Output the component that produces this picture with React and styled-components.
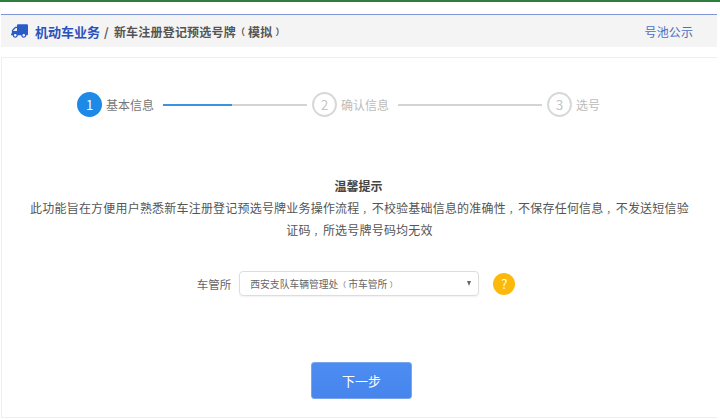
import React from 'react';
import styled, { createGlobalStyle } from 'styled-components';
import { FaTruck } from 'react-icons/fa';

const GlobalStyle = createGlobalStyle`
  html, body {
    margin: 0;
    padding: 0;
    background: #fff;
    overflow: hidden;
  }
  body {
    font-family: "Noto Sans CJK SC", "Liberation Sans", sans-serif;
  }
`;

const Page = styled.div`
  width: 720px;
  height: 419px;
  box-sizing: border-box;
  border-top: 2px solid #2e7d3c;
  padding: 12px 3px 0 1px;
  overflow: hidden;
`;

const Header = styled.header`
  height: 32px;
  border-top: 1px solid #7f94d4;
  background: #f4f4f4;
  display: flex;
  align-items: center;
  padding: 0 24px 0 10px;
`;

const Crumbs = styled.div`
  display: flex;
  align-items: center;
  font-size: 12px;
  letter-spacing: 0.2px;
  font-weight: 700;
  color: #555;
`;

const Truck = styled(FaTruck)`
  width: 17px;
  height: 14px;
  margin-right: 7px;
  color: #2a5cc8;
  transform: scaleX(-1);
`;

const Strong = styled.span`
  color: #2b51bd;
  font-size: 13px;
  letter-spacing: 0;
`;

const Slash = styled.span`
  margin: 0 5px 0 4px;
`;

/* 全角括号在字框内居中 */
const Paren = styled.span`
  font-size: ${p => p.$size}px;
  line-height: 1;
  padding: ${p => (p.$open ? `0 ${p.$pad}px 0 0` : `0 0 0 ${p.$pad}px`)};
`;

/* 逗号偏到字框中间 */
const Comma = styled.span`
  font-size: 9px;
  line-height: 1;
  padding-left: 3px;
`;

const PoolLink = styled.a`
  margin-left: auto;
  font-size: 12px;
  letter-spacing: 0.1px;
  color: #4a6fc0;
`;

const Panel = styled.main`
  margin-top: 10px;
  height: 361px;
  box-sizing: border-box;
  border-top: 1px solid #eee;
  border-left: 1px solid #eee;
  border-bottom: 1px solid #eee;
  display: flex;
  flex-direction: column;
  align-items: center;
`;

const Steps = styled.div`
  align-self: flex-start;
  margin: 34px 0 0 75px;
  display: flex;
  align-items: center;
`;

const Circle = styled.span`
  width: 25px;
  height: 25px;
  margin-right: 4px;
  box-sizing: border-box;
  border-radius: 50%;
  display: flex;
  align-items: center;
  justify-content: center;
  font-size: 13px;
  background: ${p => (p.$active ? '#1c8ae6' : '#fff')};
  color: ${p => (p.$active ? '#fff' : '#c4c4c4')};
  border: ${p => (p.$active ? 'none' : '2px solid #d8d8d8')};
`;

const StepLabel = styled.span`
  font-size: 12px;
  color: ${p => (p.$active ? '#777' : '#bbb')};
`;

const Track = styled.span`
  width: 144px;
  height: 2px;
  margin: 0 5px 0 9px;
  background: #d4d4d4;
  display: block;
`;

const TrackFill = styled.span`
  display: block;
  width: 48%;
  height: 100%;
  background: #3d92e0;
`;

const Notice = styled.section`
  margin-top: 58px;
  width: 665px;
  text-align: center;
  color: #555;
  font-size: 12px;
  letter-spacing: 0.2px;
  line-height: 22px;
`;

const NoticeTitle = styled.div`
  font-weight: 700;
  letter-spacing: 0;
  padding-right: 2px;
  color: #444;
`;

const NoticeLine = styled.div`
  white-space: nowrap;
`;

const FormRow = styled.div`
  margin-top: 30px;
  margin-right: 7px;
  display: flex;
  align-items: center;
`;

const FieldLabel = styled.label`
  font-size: 11.5px;
  color: #666;
  margin-right: 8px;
`;

const SelectBox = styled.div`
  width: 240px;
  height: 25px;
  box-sizing: border-box;
  border: 1px solid #ddd;
  border-radius: 4px;
  padding: 0 7px 0 10px;
  display: flex;
  align-items: center;
  justify-content: space-between;
  font-size: 9.8px;
  color: #666;
  white-space: nowrap;
  box-shadow: 0 1px 2px rgba(0, 0, 0, 0.06);
`;

const Caret = styled.span`
  width: 0;
  height: 0;
  border-left: 2.5px solid transparent;
  border-right: 2.5px solid transparent;
  border-top: 5px solid #666;
`;

const Help = styled.span`
  margin-left: 14px;
  width: 22px;
  height: 22px;
  border-radius: 50%;
  background: #fdb90b;
  color: #fff;
  font-size: 13px;
  display: flex;
  align-items: center;
  justify-content: center;
`;

const NextButton = styled.button`
  margin-top: 66px;
  margin-left: 4px;
  width: 101px;
  height: 37px;
  border: 1px solid #7aa5ee;
  border-radius: 3px;
  background: linear-gradient(#4d8df2, #4685ec);
  color: #fff;
  font-family: inherit;
  font-size: 13px;
`;

export default function App() {
  return (
    <>
      <GlobalStyle />
      <Page>
        <Header>
          <Crumbs>
            <Truck />
            <Strong>机动车业务</Strong>
            <Slash>/</Slash>
            新车注册登记预选号牌<Paren $open $size={9} $pad={3}>（</Paren>模拟<Paren $size={9} $pad={3}>）</Paren>
          </Crumbs>
          <PoolLink>号池公示</PoolLink>
        </Header>
        <Panel>
          <Steps>
            <Circle $active>1</Circle>
            <StepLabel $active>基本信息</StepLabel>
            <Track><TrackFill /></Track>
            <Circle>2</Circle>
            <StepLabel>确认信息</StepLabel>
            <Track />
            <Circle>3</Circle>
            <StepLabel>选号</StepLabel>
          </Steps>
          <Notice>
            <NoticeTitle>温馨提示</NoticeTitle>
            <NoticeLine>此功能旨在方便用户熟悉新车注册登记预选号牌业务操作流程<Comma>，</Comma>不校验基础信息的准确性<Comma>，</Comma>不保存任何信息<Comma>，</Comma>不发送短信验</NoticeLine>
            <NoticeLine>证码<Comma>，</Comma>所选号牌号码均无效</NoticeLine>
          </Notice>
          <FormRow>
            <FieldLabel>车管所</FieldLabel>
            <SelectBox>
              <span>西安支队车辆管理处<Paren $open $size={7.5} $pad={2.3}>（</Paren>市车管所<Paren $size={7.5} $pad={2.3}>）</Paren></span>
              <Caret />
            </SelectBox>
            <Help>?</Help>
          </FormRow>
          <NextButton>下一步</NextButton>
        </Panel>
      </Page>
    </>
  );
}
